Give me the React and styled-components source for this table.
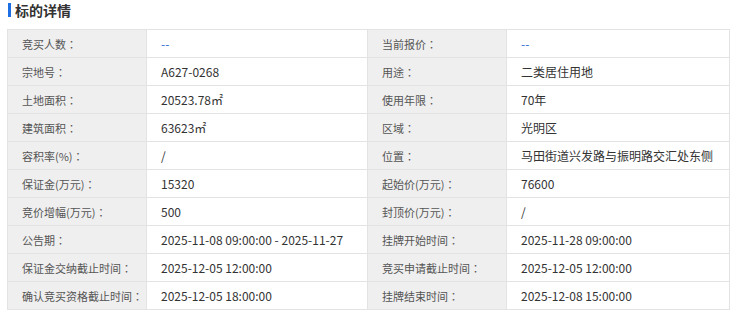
import styled, { createGlobalStyle } from "styled-components";

const GlobalStyle = createGlobalStyle`
  body {
    margin: 0;
    background: #fff;
    font-family: "Microsoft YaHei", "Noto Sans CJK SC", "Liberation Sans", sans-serif;
  }
`;

const rows = [
  ["竞买人数", "--", "当前报价", "--"],
  ["宗地号", "A627-0268", "用途", "二类居住用地"],
  ["土地面积", "20523.78㎡", "使用年限", "70年"],
  ["建筑面积", "63623㎡", "区域", "光明区"],
  ["容积率(%)", "/", "位置", "马田街道兴发路与振明路交汇处东侧"],
  ["保证金(万元)", "15320", "起始价(万元)", "76600"],
  ["竞价增幅(万元)", "500", "封顶价(万元)", "/"],
  ["公告期", "2025-11-08 09:00:00 - 2025-11-27", "挂牌开始时间", "2025-11-28 09:00:00"],
  ["保证金交纳截止时间", "2025-12-05 12:00:00", "竞买申请截止时间", "2025-12-05 12:00:00"],
  ["确认竞买资格截止时间", "2025-12-05 18:00:00", "挂牌结束时间", "2025-12-08 15:00:00"],
];

function Details() {
  return (
    <Wrapper>
      <Title>标的详情</Title>
      <Table>
        <tbody>
          {rows.map((r, i) => (
            <tr key={i}>
              <Label>
                {r[0]}
                <Colon>：</Colon>
              </Label>
              <Value $empty={r[1] === "--"}>{r[1]}</Value>
              <Label>
                {r[2]}
                <Colon>：</Colon>
              </Label>
              <Value $empty={r[3] === "--"}>{r[3]}</Value>
            </tr>
          ))}
        </tbody>
      </Table>
    </Wrapper>
  );
}

const Wrapper = styled.div`
  padding: 3px 10px 0 7px;
`;

const Title = styled.h3`
  margin: 0 0 12px 1px;
  padding-left: 4px;
  border-left: 3px solid #1d6fe3;
  font-size: 14px;
  line-height: 14px;
  font-weight: bold;
  color: #333;
`;

const Table = styled.table`
  width: 723px;
  border-collapse: collapse;
  table-layout: fixed;
  font-size: 12px;

  td {
    box-sizing: border-box;
    height: 28px;
    padding: 0 0 0 14px;
    border: 1px solid #e3e3e3;
    white-space: nowrap;
    overflow: hidden;
  }
  td:nth-child(1),
  td:nth-child(3) {
    width: 139px;
  }
  td:nth-child(2) {
    width: 221px;
  }
  td:nth-child(4) {
    width: 223px;
  }
`;

const Label = styled.td`
  background: #efefef;
  color: #555;
  font-size: 11px;
`;

const Colon = styled.span`
  font-family: "Noto Sans CJK JP", sans-serif;
`;

const Value = styled.td`
  background: #fff;
  color: ${(p) => (p.$empty ? "#2f6fd6" : "#333")};
`;

export default function App() {
  return (
    <>
      <GlobalStyle />
      <Details />
    </>
  );
}
